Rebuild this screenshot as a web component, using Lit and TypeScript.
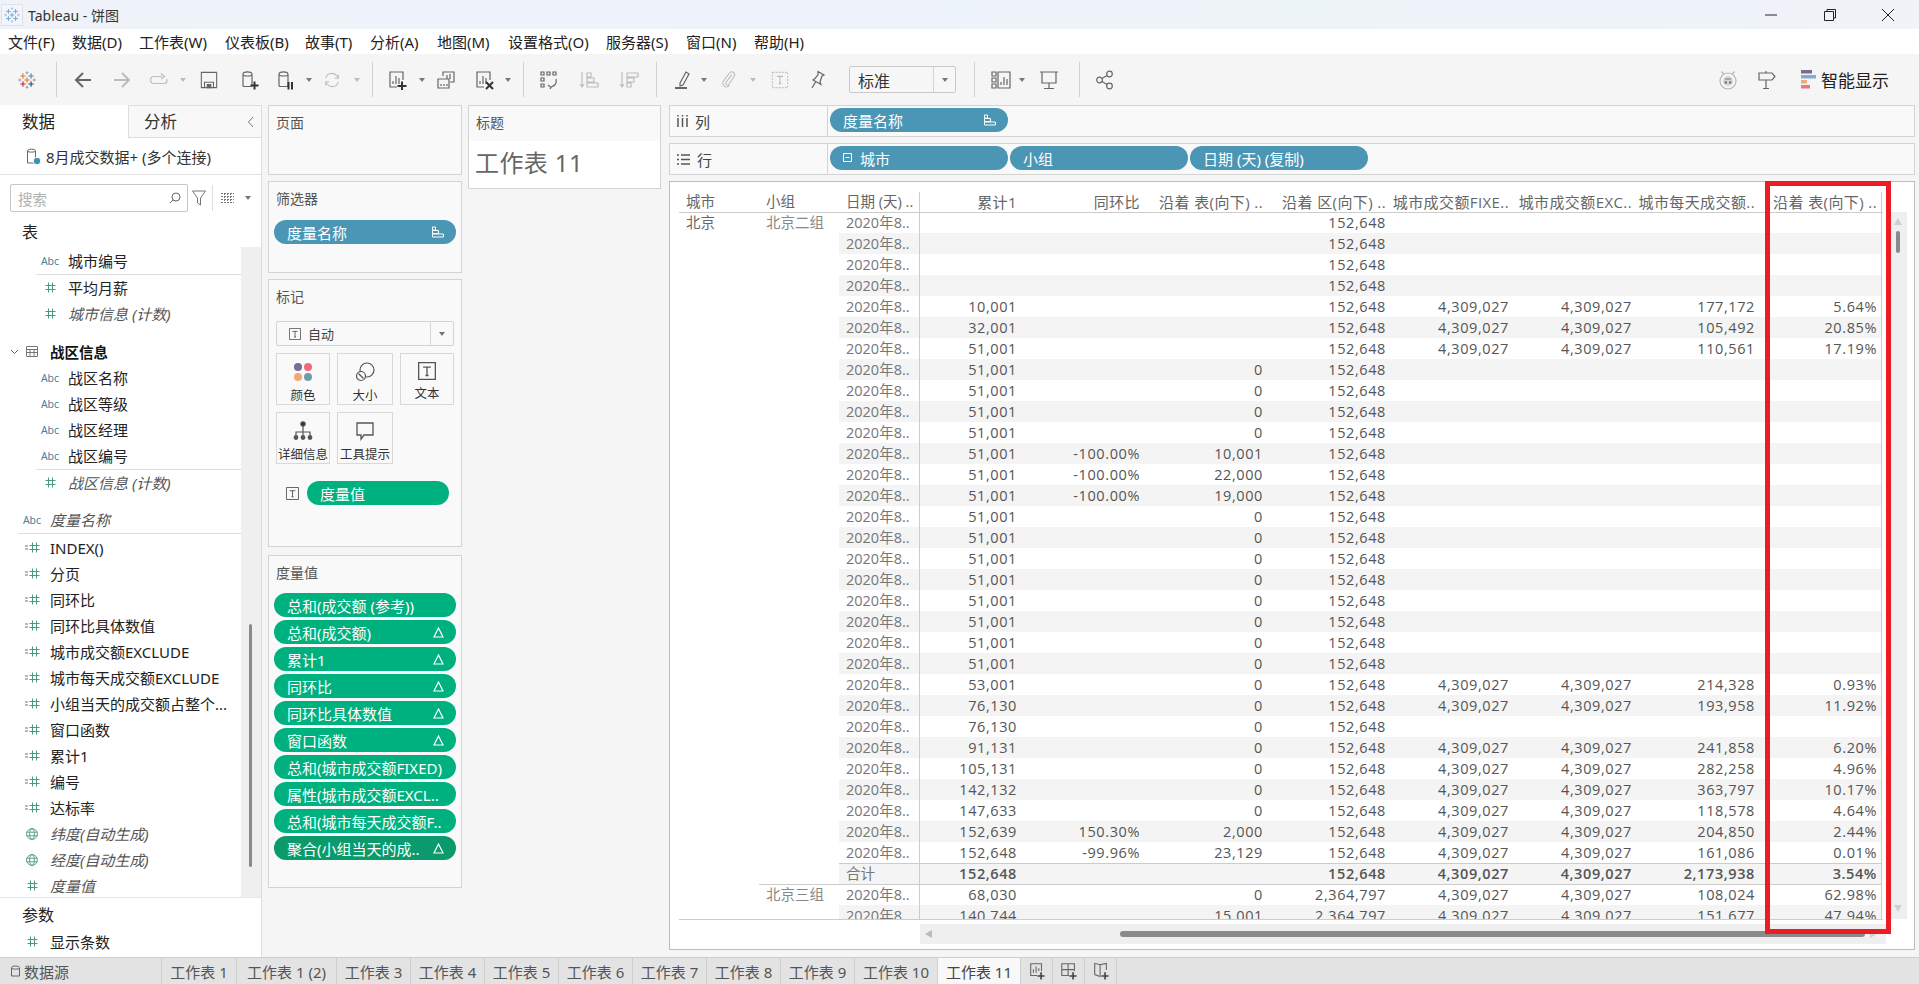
import { html, css, LitElement, svg, TemplateResult } from "lit";
import { customElement } from "lit/decorators.js";

// ---- icons ----
const ico = (w: number, body: unknown, cls = "") =>
  html`<svg class=${cls} width=${w} height=${w} viewBox="0 0 20 20" fill="none" stroke="currentColor" stroke-width="1.2">${body}</svg>`;

const cross = (x: number, y: number, r: number, c: string, sw: number) =>
  svg`<path d="M${x - r} ${y}H${x + r}M${x} ${y - r}V${y + r}" stroke=${c} stroke-width=${sw}/>`;

const logo = (size: number, c: string[]) =>
  html`<svg width=${size} height=${size} viewBox="0 0 20 20" fill="none">
    ${cross(5.5, 5.5, 3, c[0], 1.2)}${cross(14.5, 5.5, 3, c[1], 1.2)}${cross(5.5, 14.5, 3, c[2], 1.2)}${cross(14.5, 14.5, 3, c[3], 1.2)}
    ${cross(10, 10, 3, c[0], 1.2)}${cross(10, 2, 1.6, c[4], 1)}${cross(10, 18, 1.6, c[4], 1)}${cross(2, 10, 1.6, c[4], 1)}${cross(18, 10, 1.6, c[4], 1)}
  </svg>`;

const cyl = svg`<path d="M4 4.5c0-3.4 9-3.4 9 0V15.5c0 .6-.6 1-1.2 1H5.2c-.6 0-1.2-.4-1.2-1zM4 4.5c0 2 9 2 9 0"/>`;
const sheet = svg`<path d="M10 17H3V2h13v8M6 14v-3M9 14V6M12 14V8"/>`;
const caret = html`<span class="caret"></span>`;
const caretOff = html`<span class="caret off"></span>`;

const hash = (c = "#4c9a7e") =>
  html`<svg width="11" height="11" viewBox="0 0 11 11" fill="none" stroke=${c} stroke-width="1"><path d="M3.5 .5v10M7.5 .5v10M.5 3.5h10M.5 7.5h10"/></svg>`;

const calc = html`<svg width="15" height="11" viewBox="0 0 15 11" fill="none" stroke="#4c9a7e" stroke-width="1"><path d="M7.5 .5v10M11.5 .5v10M4.5 3.5h10M4.5 7.5h10"/><path d="M0 4h3M0 7h3" stroke="#4a7f9c"/></svg>`;

const globe = html`<svg width="12" height="12" viewBox="0 0 12 12" fill="none" stroke="#4c9a7e" stroke-width=".9"><circle cx="6" cy="6" r="5.4"/><ellipse cx="6" cy="6" rx="2.4" ry="5.4"/><path d="M.6 4.2h10.8M.6 7.8h10.8"/></svg>`;

const sortIcon = html`<svg class="pill-ic" width="12" height="12" viewBox="0 0 12 12" fill="none" stroke="#fff" stroke-width="1"><path d="M.5 1h3v3h-3zM.5 4.5h6v3h-6zM.5 8h11v3H.5z"/></svg>`;
const delta = html`<svg class="pill-ic" width="11" height="11" viewBox="0 0 11 11" fill="none" stroke="#fff" stroke-width="1.2"><path d="M5.5 1 10 10H1z"/></svg>`;
const tBox = (s: number) =>
  html`<svg width=${s} height=${s} viewBox="0 0 14 14" fill="none" stroke="#555" stroke-width="1"><path d="M.5.5h13v13H.5z"/><path d="M4 4h6M7 4v6.5M5.8 10.5h2.4"/></svg>`;

type Tool = { x: number; w: number; t: TemplateResult };

// items are listed by their centre x; the gaps in between come out of the data
const place = (items: Tool[]) => {
  let right = 0;
  return items.map((it) => {
    const left = it.x - it.w / 2 - right;
    right = it.x + it.w / 2;
    return html`<span class="slot" style="margin-left:${left}px;width:${it.w}px">${it.t}</span>`;
  });
};

const sep: TemplateResult = html`<span class="tsep"></span>`;
const capAt = (x: number): Tool => ({ x, w: 7, t: caret });
const capOffAt = (x: number): Tool => ({ x, w: 7, t: caretOff });

const tools: Tool[] = [
  { x: 27, w: 18, t: logo(18, ["#e8762b", "#5b7f9e", "#c72037", "#1f447a", "#7b98b0"]) },
  { x: 56, w: 1, t: sep },
  { x: 83, w: 20, t: html`<span class="d">${ico(20, svg`<path d="M18 10H3M10 3l-7 7 7 7" stroke-width="2"/>`)}</span>` },
  { x: 122, w: 20, t: html`<span class="g">${ico(20, svg`<path d="M2 10h15M10 3l7 7-7 7" stroke-width="2"/>`)}</span>` },
  { x: 159, w: 20, t: html`<span class="g">${ico(20, svg`<path d="M13 6.5H5a3 3 0 0 0 0 7h10a3 3 0 0 0 3-3V9M12 3.5l3.5 3L12 9"/>`)}</span>` },
  capOffAt(183),
  { x: 209, w: 18, t: html`<span class="d">${ico(18, svg`<path d="M1.5 1.5h17v17h-17zM5 18.5v-6h10v6"/><path d="M8 15h4v3.5H8z" fill="currentColor"/>`)}</span>` },
  { x: 249, w: 20, t: html`<span class="d">${ico(20, svg`${cyl}<path d="M11.5 15.5h8M15.5 11.5v8" stroke="#333" stroke-width="2"/>`)}</span>` },
  { x: 285, w: 20, t: html`<span class="d">${ico(20, svg`${cyl}<path d="M13.5 12v7.5M17 12v7.5" stroke="#333" stroke-width="2"/>`)}</span>` },
  capAt(309),
  { x: 332, w: 18, t: html`<span class="g">${ico(18, svg`<path d="M3 8a7 7 0 0 1 12-3l1.5 2M17 12a7 7 0 0 1-12 3l-1.500-2M13 8h4V4M7 12H3v4"/>`)}</span>` },
  capOffAt(357),
  { x: 372, w: 1, t: sep },
  { x: 397, w: 20, t: html`<span class="d">${ico(20, svg`${sheet}<path d="M10.5 16h9M15 11.5v8.500" stroke="#333" stroke-width="2"/>`)}</span>` },
  capAt(421.5),
  { x: 446, w: 20, t: html`<span class="d">${ico(20, svg`<path d="M7 6V2h11v10h-4M2 9h11v9H2zM11 9V5M14 9V4M5 16v-2M8 16v-2M11 16v-2"/>`)}</span>` },
  { x: 484, w: 20, t: html`<span class="d">${ico(20, svg`${sheet}<path d="M12 12l7 7M19 12l-7 7" stroke="#333" stroke-width="2"/>`)}</span>` },
  capAt(508),
  { x: 523, w: 1, t: sep },
  { x: 549, w: 20, t: html`<span class="d">${ico(20, svg`<path d="M2 2h3v3H2zM8 2h3v3H8zM14 2h3v3h-3zM2 8h3v3H2zM2 14h3v3H2zM17 9c1 4-1 7-5 8M9 15l3 2.500-1 1.500"/>`)}</span>` },
  { x: 589, w: 20, t: html`<span class="g">${ico(20, svg`<path d="M3 2v15M1 14l2 3 2-3M8 3h4v4H8zM8 8h7v4H8zM8 13h11v4H8z"/>`)}</span>` },
  { x: 629, w: 20, t: html`<span class="g">${ico(20, svg`<path d="M3 2v15M1 14l2 3 2-3M8 3h11v4H8zM8 8h7v4H8zM8 13h4v4H8z"/>`)}</span>` },
  { x: 656, w: 1, t: sep },
  { x: 683, w: 20, t: html`<span class="d">${ico(20, svg`<path d="M7 13 13 2l3 2-6 11-3 1z"/><path d="M2 18h12" stroke-width="2"/>`)}</span>` },
  capAt(704),
  { x: 729, w: 18, t: html`<span class="g">${ico(18, svg`<path d="M13 4 6.500 13a2 2 0 0 0 3 2.200l6-9a3.200 3.200 0 0 0-5-4L4 11a4 4 0 0 0 6.500 5"/>`)}</span>` },
  capOffAt(753),
  { x: 780, w: 18, t: html`<span class="g">${ico(18, svg`<path d="M1.500 1.500h17v17h-17z" stroke-dasharray="2 1.500"/><path d="M6.500 6h7M10 6v8M8.500 14h3"/>`)}</span>` },
  { x: 817, w: 20, t: html`<span class="d">${ico(20, svg`<path d="M11 1.500 17 5l-2 1-2 6 1 2.500-8-4.500 2-1.500 3-4zM8.500 12 5 18"/>`)}</span>` },
  {
    x: 902.5,
    w: 107,
    t: html`<span class="std"><span class="std-t">标准</span><span class="std-c">${caret}</span></span>`,
  },
  { x: 974, w: 1, t: sep },
  { x: 1001, w: 20, t: html`<span class="d">${ico(20, svg`<path d="M1 2h4v4H1zM1 8h4v4H1zM1 14h4v4H1zM7 2h12v16H7z"/><path d="M10 15v-3M13 15V7M16 15V9"/>`)}</span>` },
  capAt(1022),
  { x: 1049, w: 20, t: html`<span class="d">${ico(20, svg`<path d="M1 2h18M3 2v11h14V2M10 13v5M5 18.500h10"/>`)}</span>` },
  { x: 1079, w: 1, t: sep },
  { x: 1105, w: 20, t: html`<span class="d">${ico(20, svg`<circle cx="4.500" cy="10" r="2.800"/><circle cx="14.500" cy="4" r="2.800"/><circle cx="14.500" cy="16" r="2.800"/><path d="M7 8.500 12 5.500M7 11.500l5 3"/>`)}</span>` },
  {
    x: 1728,
    w: 20,
    t: html`<svg width="20" height="20" viewBox="0 0 20 20" fill="none" stroke="#b5b5b5" stroke-width="1.200"><circle cx="10" cy="11" r="8"/><path d="M3.500 1.500 6 4.500M16.500 1.500 14 4.500"/><circle cx="10" cy="11" r="5" fill="#d6d6d6" stroke="none"/><circle cx="7.800" cy="12.500" r="1.300" fill="#777" stroke="none"/><circle cx="12.200" cy="12.500" r="1.300" fill="#777" stroke="none"/><path d="M7 9h6" stroke="#888"/></svg>`,
  },
  { x: 1766.5, w: 20, t: html`<span class="d">${ico(20, svg`<path d="M2 3h13l3 3.500-3 3.500H2zM9 1v2M9 10v8M6 18.500h6"/>`)}</span>` },
  {
    x: 1808,
    w: 15,
    t: html`<svg width="15" height="19" viewBox="0 0 15 19"><rect width="11" height="3.500" fill="#7b6a95"/><rect y="5" width="15" height="3.500" fill="#86a9d0"/><rect y="10" width="6" height="3.500" fill="#f0a87e"/><rect y="15" width="9" height="3.500" fill="#ef7380"/></svg>`,
  },
  { x: 1855, w: 70, t: html`<span class="showme">智能显示</span>` },
];

const menuItems: [string, number][] = [
  ["文件(F)", 8],
  ["数据(D)", 72],
  ["工作表(W)", 139],
  ["仪表板(B)", 225],
  ["故事(T)", 305],
  ["分析(A)", 370],
  ["地图(M)", 437],
  ["设置格式(O)", 508],
  ["服务器(S)", 606],
  ["窗口(N)", 686],
  ["帮助(H)", 754],
];

// ---- side list ----
type Field = { k: string; n: string; nested?: boolean; it?: boolean; sep?: boolean; head?: boolean; gap?: number };

const fields: Field[] = [
  { k: "abc", n: "城市编号", nested: true, sep: true },
  { k: "num", n: "平均月薪", nested: true },
  { k: "num", n: "城市信息 (计数)", nested: true, it: true },
  { k: "tbl", n: "战区信息", head: true, gap: 12 },
  { k: "abc", n: "战区名称", nested: true },
  { k: "abc", n: "战区等级", nested: true },
  { k: "abc", n: "战区经理", nested: true },
  { k: "abc", n: "战区编号", nested: true, sep: true },
  { k: "num", n: "战区信息 (计数)", nested: true, it: true },
  { k: "abc", n: "度量名称", it: true, gap: 11, sep: true },
  { k: "calc", n: "INDEX()" },
  { k: "calc", n: "分页" },
  { k: "calc", n: "同环比" },
  { k: "calc", n: "同环比具体数值" },
  { k: "calc", n: "城市成交额EXCLUDE" },
  { k: "calc", n: "城市每天成交额EXCLUDE" },
  { k: "calc", n: "小组当天的成交额占整个..." },
  { k: "calc", n: "窗口函数" },
  { k: "calc", n: "累计1" },
  { k: "calc", n: "编号" },
  { k: "calc", n: "达标率" },
  { k: "geo", n: "纬度(自动生成)", it: true },
  { k: "geo", n: "经度(自动生成)", it: true },
  { k: "num", n: "度量值", it: true },
];

const fieldIcon = (k: string) => {
  if (k === "abc") return html`<span class="abc">Abc</span>`;
  if (k === "num") return hash();
  if (k === "calc") return calc;
  if (k === "geo") return globe;
  return html`<svg width="12" height="11" viewBox="0 0 12 11" fill="none" stroke="#777" stroke-width="1"><path d="M.5.5h11v10H.5zM.5 3.500h11M.5 6.500h11M4 3.500v7M8 3.500v7"/></svg>`;
};

const valuePills: [string, boolean][] = [
  ["总和(成交额 (参考))", false],
  ["总和(成交额)", true],
  ["累计1", true],
  ["同环比", true],
  ["同环比具体数值", true],
  ["窗口函数", true],
  ["总和(城市成交额FIXED)", false],
  ["属性(城市成交额EXCL..", false],
  ["总和(城市每天成交额F..", false],
  ["聚合(小组当天的成..", true],
];

const markButtons: [string, TemplateResult][] = [
  [
    "颜色",
    html`<svg width="20" height="20" viewBox="0 0 20 20"><circle cx="5" cy="5" r="4" fill="#7b6a95"/><circle cx="15" cy="5" r="4" fill="#ef6a78"/><circle cx="5" cy="15" r="4" fill="#f2a67a"/><circle cx="15" cy="15" r="4" fill="#6f9ea6"/></svg>`,
  ],
  [
    "大小",
    html`<svg width="20" height="20" viewBox="0 0 20 20" fill="none" stroke="#555" stroke-width="1.200"><circle cx="12" cy="8" r="7"/><circle cx="6" cy="14" r="4.500" fill="#f9f9f9"/><path d="M3.500 11.500l5 5"/></svg>`,
  ],
  ["文本", tBox(18)],
  [
    "详细信息",
    html`<svg width="20" height="20" viewBox="0 0 20 20" fill="none" stroke="#555" stroke-width="1.200"><circle cx="10" cy="3" r="2.200" fill="#333"/><path d="M10 5v6M3 14v-3h14v3M10 11v3"/><circle cx="3" cy="16.500" r="1.800" fill="#555"/><circle cx="10" cy="16.500" r="1.800" fill="#555"/><circle cx="17" cy="16.500" r="1.800" fill="#555"/></svg>`,
  ],
  [
    "工具提示",
    html`<svg width="20" height="20" viewBox="0 0 20 20" fill="none" stroke="#555" stroke-width="1.300"><path d="M2 2h16v12H9l-3 4v-4H2z"/></svg>`,
  ],
];

// ---- table data ----
const ZONE = "152,648";
const CITY = "4,309,027";
type Row = string[];
const row = (sum = "", ratio = "", diff = "", daily = "", pct = "", zone = ZONE): Row => [
  sum,
  ratio,
  diff,
  zone,
  daily ? CITY : "",
  daily ? CITY : "",
  daily,
  pct,
];

const rows: Row[] = [
  row(),
  row(),
  row(),
  row(),
  row("10,001", "", "", "177,172", "5.64%"),
  row("32,001", "", "", "105,492", "20.85%"),
  row("51,001", "", "", "110,561", "17.19%"),
  row("51,001", "", "0"),
  row("51,001", "", "0"),
  row("51,001", "", "0"),
  row("51,001", "", "0"),
  row("51,001", "-100.00%", "10,001"),
  row("51,001", "-100.00%", "22,000"),
  row("51,001", "-100.00%", "19,000"),
  row("51,001", "", "0"),
  row("51,001", "", "0"),
  row("51,001", "", "0"),
  row("51,001", "", "0"),
  row("51,001", "", "0"),
  row("51,001", "", "0"),
  row("51,001", "", "0"),
  row("51,001", "", "0"),
  row("53,001", "", "0", "214,328", "0.93%"),
  row("76,130", "", "0", "193,958", "11.92%"),
  row("76,130", "", "0"),
  row("91,131", "", "0", "241,858", "6.20%"),
  row("105,131", "", "0", "282,258", "4.96%"),
  row("142,132", "", "0", "363,797", "10.17%"),
  row("147,633", "", "0", "118,578", "4.64%"),
  row("152,639", "150.30%", "2,000", "204,850", "2.44%"),
  row("152,648", "-99.96%", "23,129", "161,086", "0.01%"),
  row("152,648", "", "", "2,173,938", "3.54%"),
  row("68,030", "", "0", "108,024", "62.98%", "2,364,797"),
  row("140,744", "", "15,001", "151,677", "47.94%", "2,364,797"),
];

const heads = ["累计1", "同环比", "沿着 表(向下) ..", "沿着 区(向下) ..", "城市成交额FIXE..", "城市成交额EXC..", "城市每天成交额..", "沿着 表(向下) .."];

const tabs: [string, number][] = [
  ["工作表 1", 75],
  ["工作表 1 (2)", 100],
  ["工作表 3", 74],
  ["工作表 4", 74],
  ["工作表 5", 74],
  ["工作表 6", 74],
  ["工作表 7", 74],
  ["工作表 8", 74],
  ["工作表 9", 74],
  ["工作表 10", 83],
];

const addIcons = [
  svg`<path d="M10 15H3V2h12v8M6 12V8M9 12V5M12 10V7"/><path d="M10.500 15.500h8M14.500 11.500v8" stroke="#444" stroke-width="1.800"/>`,
  svg`<path d="M10 15H2V2h14v8M2 8.500h14M9 2v13"/><path d="M10.500 15.500h8M14.500 11.500v8" stroke="#444" stroke-width="1.800"/>`,
  svg`<path d="M9 3 3 1.500V14l6 2V3l7-1.500V9"/><path d="M10.500 15.500h8M14.500 11.500v8" stroke="#444" stroke-width="1.800"/>`,
];

@customElement("app-root")
export class AppRoot extends LitElement {
  static styles = css`
    :host {
      display: block;
      height: 984px;
      overflow: hidden;
      background: #f5f5f5;
      color: #222;
      font-family: "Noto Sans", "Noto Sans CJK SC", sans-serif;
      font-size: 14.5px;
    }
    .titlebar {
      height: 29px;
      display: flex;
      align-items: center;
      background: linear-gradient(90deg, #eff2f9 0%, #eef3fb 45%, #edf4f7 68%, #eef3fa 85%, #f0f3f8 100%);
      font-size: 14px;
      color: #333;
    }
    .tb-logo {
      width: 22px;
      height: 22px;
      margin-left: 1px;
      margin-right: 5px;
      display: flex;
      align-items: center;
      justify-content: center;
      background: #f3f5f9;
      border: 1px solid #dde2ea;
      box-sizing: border-box;
    }
    .win {
      flex: 1;
      display: flex;
      align-items: center;
      justify-content: flex-end;
      gap: 44.5px;
      padding-right: 24px;
    }
    .menubar {
      height: 25px;
      background: #fff;
      display: flex;
      align-items: center;
      font-size: 15px;
      color: #222;
    }
    .toolbar {
      height: 51px;
      display: flex;
      align-items: center;
      color: #666;
    }
    .slot {
      display: flex;
      align-items: center;
      justify-content: center;
      flex: none;
      white-space: nowrap;
    }
    .slot svg {
      display: block;
    }
    .menu-item {
      width: 100%;
    }
    .d {
      color: #666;
    }
    .g {
      color: #bdbdbd;
    }
    .tsep {
      width: 1px;
      height: 35px;
      background: #d2d2d2;
      display: block;
    }
    .caret {
      display: block;
      width: 0;
      height: 0;
      border-left: 3.5px solid transparent;
      border-right: 3.5px solid transparent;
      border-top: 4px solid #777;
    }
    .caret.off {
      border-top-color: #bdbdbd;
    }
    .std {
      width: 107px;
      height: 27px;
      box-sizing: border-box;
      border: 1px solid #c9c9c9;
      border-radius: 2px;
      background: #f7f7f7;
      display: flex;
      align-items: center;
      font-size: 16px;
      color: #333;
    }
    .std-t {
      flex: 1;
      padding-left: 8px;
    }
    .std-c {
      width: 21px;
      height: 100%;
      border-left: 1px solid #d4d4d4;
      display: flex;
      align-items: center;
      justify-content: center;
    }
    .showme {
      font-size: 17px;
      color: #222;
    }

    .main {
      display: flex;
      height: 852px;
    }

    /* data pane */
    .data {
      width: 262px;
      box-sizing: border-box;
      background: #fff;
      border-right: 1px solid #ddd;
      display: flex;
      flex-direction: column;
      flex: none;
    }
    .data-tabs {
      display: flex;
      height: 33px;
      flex: none;
      font-size: 16.5px;
      line-height: 33px;
    }
    .tab-on {
      width: 128px;
      padding-left: 22px;
      box-sizing: border-box;
    }
    .tab-off {
      flex: 1;
      background: #f8f8f8;
      border-left: 1px solid #ddd;
      border-bottom: 1px solid #ddd;
      border-top: 1px solid #ddd;
      padding-left: 15px;
      display: flex;
      justify-content: space-between;
      align-items: center;
      padding-right: 6px;
      color: #333;
    }
    .conn {
      height: 36px;
      flex: none;
      border-bottom: 1px solid #e2e2e2;
      display: flex;
      align-items: center;
      padding-left: 26px;
      gap: 5px;
      font-size: 15px;
      color: #333;
    }
    .search-row {
      height: 28px;
      margin-top: 9px;
      flex: none;
      display: flex;
      align-items: center;
      padding-left: 10px;
      color: #777;
    }
    .search {
      width: 178px;
      height: 28px;
      box-sizing: border-box;
      border: 1px solid #c6c6c6;
      border-radius: 2px;
      display: flex;
      align-items: center;
      justify-content: space-between;
      padding: 0 6px 0 7px;
      color: #b0b0b0;
      font-size: 14.5px;
    }
    .search svg {
      color: #666;
    }
    .filter-ic {
      margin-left: 4px;
    }
    .vsep {
      width: 1px;
      height: 26px;
      background: #ddd;
      margin: 0 8px 0 6px;
    }
    .grid-caret {
      margin-left: 11px;
    }
    .section {
      height: 26px;
      line-height: 26px;
      padding-left: 22px;
      font-size: 16px;
      color: #222;
      flex: none;
    }
    .section.first {
      margin-top: 7px;
    }
    .list-wrap {
      flex: 1;
      min-height: 0;
      display: flex;
      overflow: hidden;
    }
    .list {
      width: 241px;
      padding-top: 3px;
      flex: none;
    }
    .track {
      flex: 1;
      margin-top: 2px;
      background: #efefef;
      padding-left: 8px;
    }
    .thumb {
      width: 3px;
      height: 243px;
      margin-top: 377px;
      background: #8a8a8a;
      border-radius: 2px;
    }
    .field {
      position: relative;
      height: 26px;
      box-sizing: border-box;
      padding-bottom: 1px;
      display: flex;
      align-items: center;
      padding-left: 24px;
      font-size: 15px;
      color: #222;
      white-space: nowrap;
    }
    .field.nested {
      padding-left: 42px;
    }
    .field.it {
      font-style: italic;
      color: #555;
    }
    .field.head {
      font-weight: 700;
      font-size: 14.5px;
      color: #111;
    }
    .chev {
      position: absolute;
      left: 10px;
      top: 10px;
    }
    .f-ic {
      width: 16px;
      margin-right: 10px;
      display: flex;
      justify-content: center;
      align-items: center;
      flex: none;
    }
    .abc {
      font-size: 10.5px;
      color: #4a7f9c;
      font-style: normal;
    }
    .fsep {
      height: 1px;
      background: #dedede;
      margin-left: 36px;
    }
    .fsep.top {
      margin-left: 18px;
      margin-bottom: 1px;
    }
    .params {
      height: 60px;
      flex: none;
      box-sizing: border-box;
      border-top: 1px solid #e6e6e6;
      padding-top: 4px;
    }
    .params .section {
      margin-bottom: 1px;
    }

    /* shelves pane */
    .mid {
      width: 194px;
      margin-left: 6px;
      flex: none;
      display: flex;
      flex-direction: column;
    }
    .card {
      background: #f9f9f9;
      border: 1px solid #d3d3d3;
      box-sizing: border-box;
      flex: none;
    }
    .card-h {
      height: 35px;
      line-height: 33px;
      padding-left: 7px;
      font-size: 14px;
      color: #555;
    }
    .c-pages {
      height: 70px;
    }
    .c-filter {
      height: 92px;
      margin-top: 6px;
      padding: 0 5px;
    }
    .c-filter .card-h {
      padding-left: 2px;
    }
    .c-filter .pill {
      margin-top: 3px;
    }
    .c-marks {
      height: 268px;
      margin-top: 6px;
      padding-left: 7px;
    }
    .c-marks .card-h {
      padding-left: 0;
    }
    .c-values {
      height: 333px;
      margin-top: 8px;
      padding: 0 5px;
    }
    .c-values .card-h {
      padding-left: 2px;
      height: 36px;
    }
    .pill {
      height: 24px;
      border-radius: 12px;
      background: #4b96b4;
      color: #fff;
      display: flex;
      align-items: center;
      justify-content: space-between;
      box-sizing: border-box;
      padding: 0 12px 0 13px;
      font-size: 15px;
      white-space: nowrap;
      overflow: hidden;
      flex: none;
    }
    .pill.green {
      background: #00b180;
    }
    .pill.dark {
      background: #0a9a6c;
    }
    .pill-ic {
      flex: none;
    }
    .vals {
      display: flex;
      flex-direction: column;
      gap: 3px;
      margin-top: 1px;
    }
    .mark-type {
      width: 178px;
      height: 25px;
      margin-top: 6px;
      box-sizing: border-box;
      border: 1px solid #d3d3d3;
      border-radius: 2px;
      display: flex;
      align-items: center;
      font-size: 13px;
      color: #444;
    }
    .mt-l {
      flex: 1;
      display: flex;
      align-items: center;
      gap: 7px;
      padding-left: 12px;
    }
    .mt-r {
      width: 22px;
      height: 100%;
      border-left: 1px solid #d8d8d8;
      display: flex;
      align-items: center;
      justify-content: center;
    }
    .marks {
      display: grid;
      grid-template-columns: 54px 56px 54px;
      grid-auto-rows: 52px;
      gap: 7px;
      margin-top: 7px;
    }
    .mark {
      border: 1px solid #d8d8d8;
      box-sizing: border-box;
      display: flex;
      flex-direction: column;
      align-items: center;
      padding-top: 8px;
      font-size: 12.5px;
      line-height: 18px;
      color: #333;
      white-space: nowrap;
    }
    .mark svg {
      margin-bottom: 5px;
      flex: none;
    }
    .mark-pill {
      display: flex;
      align-items: center;
      gap: 8px;
      margin: 17px 0 0 10px;
    }
    .mark-pill .pill {
      width: 142px;
    }

    /* title card */
    .c-title {
      width: 193px;
      height: 84px;
      margin-left: 6px;
      background: #fff;
    }
    .c-title .card-h {
      background: #f9f9f9;
    }
    .sheet-title {
      font-size: 24px;
      color: #666;
      padding-left: 6px;
      line-height: 44px;
      letter-spacing: 0.4px;
      white-space: nowrap;
    }

    /* view */
    .right {
      width: 1246px;
      margin-left: 8px;
      flex: none;
    }
    .shelf {
      height: 32px;
      display: flex;
      background: #f9f9f9;
      border: 1px solid #d3d3d3;
      box-sizing: border-box;
      margin-bottom: 6px;
    }
    .shelf-l {
      width: 158px;
      border-right: 1px solid #d3d3d3;
      display: flex;
      align-items: center;
      gap: 7px;
      padding-left: 7px;
      box-sizing: border-box;
      font-size: 15px;
      color: #444;
      flex: none;
    }
    .shelf-p {
      display: flex;
      gap: 2px;
      padding: 2px 0 0 2px;
    }
    .shelf-p .pill {
      width: 178px;
    }
    .pill-l {
      display: flex;
      align-items: center;
      gap: 7px;
    }
    .view {
      position: relative;
      height: 769px;
      box-sizing: border-box;
      background: #fff;
      border: 1px solid #bdbdbd;
      padding: 10px 0 0 9px;
    }
    .t-outer {
      display: flex;
    }
    .tbl {
      width: 1204px;
      flex: none;
      font-family: "Open Sans", "Noto Sans CJK SC", sans-serif;
      font-size: 14.5px;
      color: #555;
      line-height: 21px;
    }
    .grid-h,
    .band {
      display: grid;
      grid-template-columns: 81px 101px repeat(7, 123px);
    }
    .thead {
      display: flex;
      height: 21px;
      border-bottom: 1px solid #ccc;
      box-sizing: border-box;
      color: #666;
      line-height: 20px;
    }
    .thead .grid-h {
      width: 1043px;
    }
    .tbody {
      height: 708px;
      overflow: hidden;
      margin-top: -1px;
      border-bottom: 1px solid #ccc;
      box-sizing: border-box;
    }
    .tr {
      display: flex;
      height: 21px;
    }
    .lbl {
      width: 80px;
      flex: none;
      padding-left: 7px;
      box-sizing: border-box;
      white-space: nowrap;
    }
    .lbl.city {
      color: #666;
    }
    .lbl.grp {
      color: #888;
    }
    .lbl.grp.ruled {
      box-shadow: inset 0 1px #ccc;
    }
    .band {
      width: 1043px;
      flex: none;
    }
    .band.z {
      background: #f4f4f4;
    }
    .band.total {
      font-weight: 600;
      box-shadow: inset 0 1px #ccc;
    }
    .band.ruled {
      box-shadow: inset 0 1px #ccc;
    }
    .cell {
      text-align: right;
      padding-right: 4px;
      white-space: nowrap;
      letter-spacing: 0.6px;
      overflow: hidden;
      box-sizing: border-box;
    }
    .th {
      text-align: right;
      padding-right: 4px;
      white-space: nowrap;
      overflow: hidden;
      box-sizing: border-box;
      font-size: 15px;
      letter-spacing: 0.4px;
    }
    .cell.dt,
    .th.dt {
      text-align: left;
      padding-left: 7px;
      padding-right: 0;
      color: #777;
      font-size: 14.5px;
      font-weight: 400;
      letter-spacing: 0;
      border-right: 1px solid #ccc;
    }
    .th.dt {
      color: #666;
    }
    .cell:last-child,
    .th:last-child {
      border-right: 1px solid #ccc;
    }
    .lbl-h {
      padding-left: 7px;
      width: 80px;
      flex: none;
      box-sizing: border-box;
      color: #666;
    }
    .vbar {
      width: 19px;
      height: 707px;
      margin: 20px 0 0 5px;
      background: #efefef;
      display: flex;
      flex-direction: column;
      align-items: center;
      flex: none;
    }
    .v-thumb {
      width: 4px;
      height: 22px;
      border-radius: 2px;
      background: #8a8a8a;
      margin-top: 6px;
    }
    .arrow-up {
      width: 0;
      height: 0;
      margin-top: 6px;
      border-left: 4.5px solid transparent;
      border-right: 4.5px solid transparent;
      border-bottom: 7px solid #cfcfcf;
    }
    .arrow-dn {
      width: 0;
      height: 0;
      margin-top: auto;
      margin-bottom: 7px;
      border-left: 4.5px solid transparent;
      border-right: 4.5px solid transparent;
      border-top: 7px solid #cfcfcf;
    }
    .hbar {
      width: 966px;
      height: 20px;
      margin: 4px 0 0 241px;
      background: #efefef;
      display: flex;
      align-items: center;
    }
    .h-thumb {
      width: 745px;
      height: 6px;
      margin-left: 188px;
      border-radius: 3px;
      background: #8a8a8a;
    }
    .arrow-l {
      width: 0;
      height: 0;
      margin-left: 5px;
      border-top: 4.5px solid transparent;
      border-bottom: 4.5px solid transparent;
      border-right: 7px solid #bbb;
    }
    .arrow-r {
      width: 0;
      height: 0;
      margin-left: 5px;
      border-top: 4.5px solid transparent;
      border-bottom: 4.5px solid transparent;
      border-left: 7px solid #cfcfcf;
    }
    .red-box {
      position: absolute;
      left: 1095px;
      top: -1px;
      width: 126px;
      height: 753px;
      box-sizing: border-box;
      border: 5px solid #ed1c24;
      pointer-events: none;
    }

    /* sheet tabs */
    .tabs {
      height: 27px;
      display: flex;
      box-sizing: border-box;
      background: #e3e3e3;
      border-top: 1px solid #cdcdcd;
      font-size: 15px;
      color: #555;
    }
    .t {
      box-sizing: border-box;
      border-right: 1px solid #cfcfcf;
      display: flex;
      align-items: center;
      justify-content: center;
      white-space: nowrap;
      flex: none;
    }
    .t.src {
      width: 162px;
      justify-content: flex-start;
      padding-left: 11px;
      gap: 4px;
    }
    .t.on {
      background: #f8f8f8;
      color: #444;
    }
    .t.add {
      width: 32px;
      color: #666;
    }
  `;

  render() {
    return html`
      <div class="titlebar">
        <span class="tb-logo">${logo(16, ["#6fa6d6", "#6fa6d6", "#6fa6d6", "#6fa6d6", "#9cc3e2"])}</span>
        <span>Tableau - 饼图</span>
        <div class="win">
          <svg width="14" height="14" viewBox="0 0 14 14" fill="none" stroke="#222"><path d="M1 7h12"/></svg>
          <svg width="14" height="14" viewBox="0 0 14 14" fill="none" stroke="#222"><path d="M1.500 3.500h9v9h-9zM4 3.500v-2h8.500V10h-2"/></svg>
          <svg width="14" height="14" viewBox="0 0 14 14" fill="none" stroke="#222"><path d="M1 1l12 12M13 1 1 13"/></svg>
        </div>
      </div>
      <div class="menubar">${this.renderMenu()}</div>
      <div class="toolbar">${place(tools)}</div>

      <div class="main">
        ${this.renderData()} ${this.renderMid()}
        <div class="card c-title">
          <div class="card-h">标题</div>
          <div class="sheet-title">工作表 11</div>
        </div>
        ${this.renderRight()}
      </div>
      ${this.renderTabs()}
    `;
  }

  private renderMenu() {
    return place(
      menuItems.map(([t, x], i) => {
        const w = (menuItems[i + 1]?.[1] ?? x + 50) - x;
        return { x: x + w / 2, w, t: html`<span class="menu-item">${t}</span>` };
      })
    );
  }

  private renderField(f: Field) {
    const cls = `field ${f.nested ? "nested" : ""} ${f.it ? "it" : ""} ${f.head ? "head" : ""}`;
    return html`
      <div class=${cls} style=${f.gap ? `margin-top:${f.gap}px` : ""}>
        ${f.head
          ? html`<svg class="chev" width="9" height="6" viewBox="0 0 9 6" fill="none" stroke="#666" stroke-width="1"><path d="M1 1l3.500 3.500L8 1"/></svg>`
          : ""}
        <span class="f-ic">${fieldIcon(f.k)}</span>${f.n}
      </div>
      ${f.sep ? html`<div class="fsep ${f.nested ? "" : "top"}"></div>` : ""}
    `;
  }

  private renderData() {
    return html`
      <div class="data">
        <div class="data-tabs">
          <div class="tab-on">数据</div>
          <div class="tab-off">
            分析
            <svg width="8" height="12" viewBox="0 0 8 12" fill="none" stroke="#777" stroke-width="1"><path d="M6 1 1.500 6 6 11"/></svg>
          </div>
        </div>
        <div class="conn">
          <svg width="15" height="17" viewBox="0 0 15 17" fill="none" stroke="#666" stroke-width="1"><path d="M1.500 3c0-2.500 8-2.500 8 0v12h-8zM1.500 3c0 1.500 8 1.500 8 0"/><circle cx="11" cy="13" r="3.800" fill="#3f8fb8" stroke="#fff"/></svg>
          8月成交数据+ (多个连接)
        </div>
        <div class="search-row">
          <div class="search">
            搜索
            <svg width="12" height="12" viewBox="0 0 12 12" fill="none" stroke="currentColor" stroke-width="1"><circle cx="7" cy="5" r="4"/><path d="M4 8 1 11"/></svg>
          </div>
          <svg class="filter-ic" width="14" height="16" viewBox="0 0 14 16" fill="none" stroke="currentColor" stroke-width="1"><path d="M.5 1h13L8.500 8v7l-3-2V8z"/></svg>
          <span class="vsep"></span>
          <svg width="13" height="11" viewBox="0 0 13 11" fill="none" stroke="currentColor" stroke-width="1"><path d="M0 .5h13M0 3.500h13M0 6.500h13M0 9.500h13M3.500 0v10M6.500 0v10M9.500 0v10" stroke-dasharray="2 1"/></svg>
          <span class="grid-caret">${caret}</span>
        </div>
        <div class="section first">表</div>
        <div class="list-wrap">
          <div class="list">${fields.map((f) => this.renderField(f))}</div>
          <div class="track"><div class="thumb"></div></div>
        </div>
        <div class="params">
          <div class="section">参数</div>
          ${this.renderField({ k: "num", n: "显示条数" })}
        </div>
      </div>
    `;
  }

  private renderMid() {
    return html`
      <div class="mid">
        <div class="card c-pages"><div class="card-h">页面</div></div>
        <div class="card c-filter">
          <div class="card-h">筛选器</div>
          <div class="pill"><span>度量名称</span>${sortIcon}</div>
        </div>
        <div class="card c-marks">
          <div class="card-h">标记</div>
          <div class="mark-type">
            <span class="mt-l">${tBox(12)}自动</span>
            <span class="mt-r">${caret}</span>
          </div>
          <div class="marks">
            ${markButtons.map(([label, icon]) => html`<div class="mark">${icon}${label}</div>`)}
          </div>
          <div class="mark-pill">${tBox(13)}<div class="pill green"><span>度量值</span></div></div>
        </div>
        <div class="card c-values">
          <div class="card-h">度量值</div>
          <div class="vals">
            ${valuePills.map(
              ([label, d], i) =>
                html`<div class="pill green ${i === valuePills.length - 1 ? "dark" : ""}"><span>${label}</span>${d ? delta : ""}</div>`
            )}
          </div>
        </div>
      </div>
    `;
  }

  private renderRow(r: Row, i: number) {
    const isTotal = i === 31;
    const band = `band ${i % 2 ? "z" : ""} ${isTotal ? "total" : ""} ${i === 32 ? "ruled" : ""}`;
    const date = isTotal ? "合计" : "2020年8..";
    return html`
      <div class="tr">
        <div class="lbl city">${i === 0 ? "北京" : ""}</div>
        <div class="lbl grp ${i === 32 ? "ruled" : ""}">${i === 0 ? "北京二组" : i === 32 ? "北京三组" : ""}</div>
        <div class=${band}>
          <div class="cell dt">${date}</div>
          ${r.map((v) => html`<div class="cell">${v}</div>`)}
        </div>
      </div>
    `;
  }

  private renderRight() {
    return html`
      <div class="right">
        <div class="shelf">
          <div class="shelf-l">
            <svg width="11" height="12" viewBox="0 0 11 12" fill="none" stroke="#555" stroke-width="1.500"><path d="M1 3v9M5.500 3v9M10 3v9M1 0v1.500M5.500 0v1.500M10 0v1.500"/></svg>
            列
          </div>
          <div class="shelf-p"><div class="pill"><span>度量名称</span>${sortIcon}</div></div>
        </div>
        <div class="shelf">
          <div class="shelf-l">
            <svg width="13" height="11" viewBox="0 0 13 11" fill="none" stroke="#555" stroke-width="1.500"><path d="M0 1h2M0 5.500h2M0 10h2M4 1h9M4 5.500h9M4 10h9"/></svg>
            行
          </div>
          <div class="shelf-p">
            <div class="pill">
              <span class="pill-l"><svg width="10" height="10" viewBox="0 0 10 10" fill="none" stroke="#fff" stroke-width="1"><path d="M.5.5h8v8h-8zM2.500 4.500h4"/></svg>城市</span>
            </div>
            <div class="pill"><span>小组</span></div>
            <div class="pill"><span>日期 (天) (复制)</span></div>
          </div>
        </div>
        <div class="view">
          <div class="t-outer">
            <div class="tbl">
              <div class="thead">
                <div class="lbl-h">城市</div>
                <div class="lbl-h">小组</div>
                <div class="grid-h">
                  <div class="th dt">日期 (天) ..</div>
                  ${heads.map((h) => html`<div class="th">${h}</div>`)}
                </div>
              </div>
              <div class="tbody">${rows.map((r, i) => this.renderRow(r, i))}</div>
            </div>
            <div class="vbar">
              <span class="arrow-up"></span>
              <span class="v-thumb"></span>
              <span class="arrow-dn"></span>
            </div>
          </div>
          <div class="hbar">
            <span class="arrow-l"></span>
            <span class="h-thumb"></span>
            <span class="arrow-r"></span>
          </div>
          <div class="red-box"></div>
        </div>
      </div>
    `;
  }

  private renderTabs() {
    return html`
      <div class="tabs">
        <div class="t src">
          <svg width="9" height="12" viewBox="0 0 9 12" fill="none" stroke="#666" stroke-width="1"><path d="M.5 2.500c0-2 8-2 8 0v8.500h-8zM.5 3c0 1.500 8 1.500 8 0"/></svg>
          数据源
        </div>
        ${tabs.map(([t, w]) => html`<div class="t" style="width:${w}px">${t}</div>`)}
        <div class="t on" style="width:83px">工作表 11</div>
        ${addIcons.map((ic) => html`<div class="t add">${ico(18, ic)}</div>`)}
      </div>
    `;
  }
}
